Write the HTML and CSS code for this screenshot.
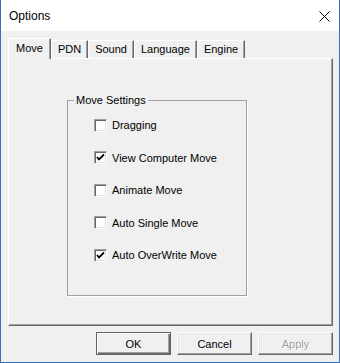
FILE: index.html
```html
<!DOCTYPE html>
<html lang="en">
<head>
    <meta charset="UTF-8">
    <title>Options</title>
    <link rel="stylesheet" href="styles.css">
</head>
<body>
    <div class="window">
        <div class="titlebar">
            <span class="title">Options</span>
            <svg class="close" width="11" height="11" viewBox="0 0 11 11">
                <path d="M0.5 0.5 L10.5 10.5 M10.5 0.5 L0.5 10.5" stroke="#000" stroke-width="1" fill="none"/>
            </svg>
        </div>

        <div class="client">
            <div class="tabs">
                <div class="tab active">Move</div>
                <div class="tab">PDN</div>
                <div class="tab">Sound</div>
                <div class="tab">Language</div>
                <div class="tab">Engine</div>
            </div>

            <div class="panel">
                <fieldset class="group">
                    <legend>Move Settings</legend>
                    <div class="check"><span class="box"></span>Dragging</div>
                    <div class="check"><span class="box"><svg width="11" height="11" viewBox="0 0 11 11"><path d="M2 5 L4 7.5 L9 2.5" stroke="#000" stroke-width="1.8" fill="none"/></svg></span>View Computer Move</div>
                    <div class="check"><span class="box"></span>Animate Move</div>
                    <div class="check"><span class="box"></span>Auto Single Move</div>
                    <div class="check"><span class="box"><svg width="11" height="11" viewBox="0 0 11 11"><path d="M2 5 L4 7.5 L9 2.5" stroke="#000" stroke-width="1.8" fill="none"/></svg></span>Auto OverWrite Move</div>
                </fieldset>
            </div>

            <div class="buttons">
                <button type="button" class="btn default">OK</button>
                <button type="button" class="btn">Cancel</button>
                <button type="button" class="btn" disabled>Apply</button>
            </div>
        </div>
    </div>
</body>
</html>
```

FILE: styles.css
```css
body {
    margin: 0;
    font-family: "Liberation Sans", Arial, sans-serif;
    font-size: 11px;
    color: #000;
}

.window {
    width: 340px;
    height: 363px;
    box-sizing: border-box;
    border: 1px solid #3b6dbd;
    border-top: none;
    background: #f0f0f0;
    display: flex;
    flex-direction: column;
}

.titlebar {
    height: 31px;
    flex: none;
    background: #fff;
    display: flex;
    align-items: center;
    justify-content: space-between;
    padding: 0 9px 0 8px;
}

.title {
    font-size: 12px;
}

.close {
    display: block;
    margin-top: 1px;
}

.client {
    flex: 1;
    padding: 7px 6px 7px 7px;
    display: flex;
    flex-direction: column;
}

.tabs {
    height: 20px;
    display: flex;
    align-items: flex-end;
}

.tab {
    position: relative;
    height: 18px;
    box-sizing: border-box;
    padding: 0 6px;
    line-height: 17px;
    border: 1px solid;
    border-color: #fff #696969 transparent #fff;
    border-bottom: none;
    box-shadow: inset -1px 0 #a0a0a0;
    background: #f0f0f0;
}

.tab.active {
    height: 21px;
    margin-bottom: -1px;
    padding: 0 7px;
    line-height: 19px;
    z-index: 1;
}

.panel {
    height: 268px;
    box-sizing: border-box;
    border: 1px solid;
    border-color: #fff #696969 #696969 #fff;
    box-shadow: inset -1px -1px #a0a0a0;
    padding: 35px 0 0 58px;
}

.group {
    width: 180px;
    height: 202px;
    box-sizing: border-box;
    margin: 0;
    padding: 2px 0 0 26px;
    border: 1px solid #a0a0a0;
    box-shadow: 1px 1px #fff;
}

.group legend {
    margin-left: -20px;
    padding: 0 2px;
    line-height: 13px;
}

.check {
    height: 32.5px;
    display: flex;
    align-items: center;
    gap: 5px;
}

.box {
    width: 13px;
    height: 13px;
    box-sizing: border-box;
    border: 1px solid;
    border-color: #a0a0a0 #fff #fff #a0a0a0;
    box-shadow: inset 1px 1px #696969, inset -1px -1px #e3e3e3;
    background: #fff;
    display: flex;
    align-items: center;
    justify-content: center;
}

.box svg {
    display: block;
}

.buttons {
    margin-top: 6px;
    display: flex;
    justify-content: flex-end;
    gap: 6px;
}

.btn {
    width: 75px;
    height: 23px;
    margin: 0;
    padding: 0;
    font-family: inherit;
    font-size: 11px;
    color: #000;
    background: #f0f0f0;
    border: 1px solid;
    border-color: #fff #696969 #696969 #fff;
    box-shadow: inset -1px -1px #a0a0a0, inset 1px 1px #e3e3e3;
}

.btn.default {
    border-color: #646464;
    box-shadow: inset 1px 1px #fff, inset -1px -1px #696969, inset -2px -2px #a0a0a0;
}

.btn:disabled {
    color: #a0a0a0;
    text-shadow: 1px 1px #fff;
}
```
